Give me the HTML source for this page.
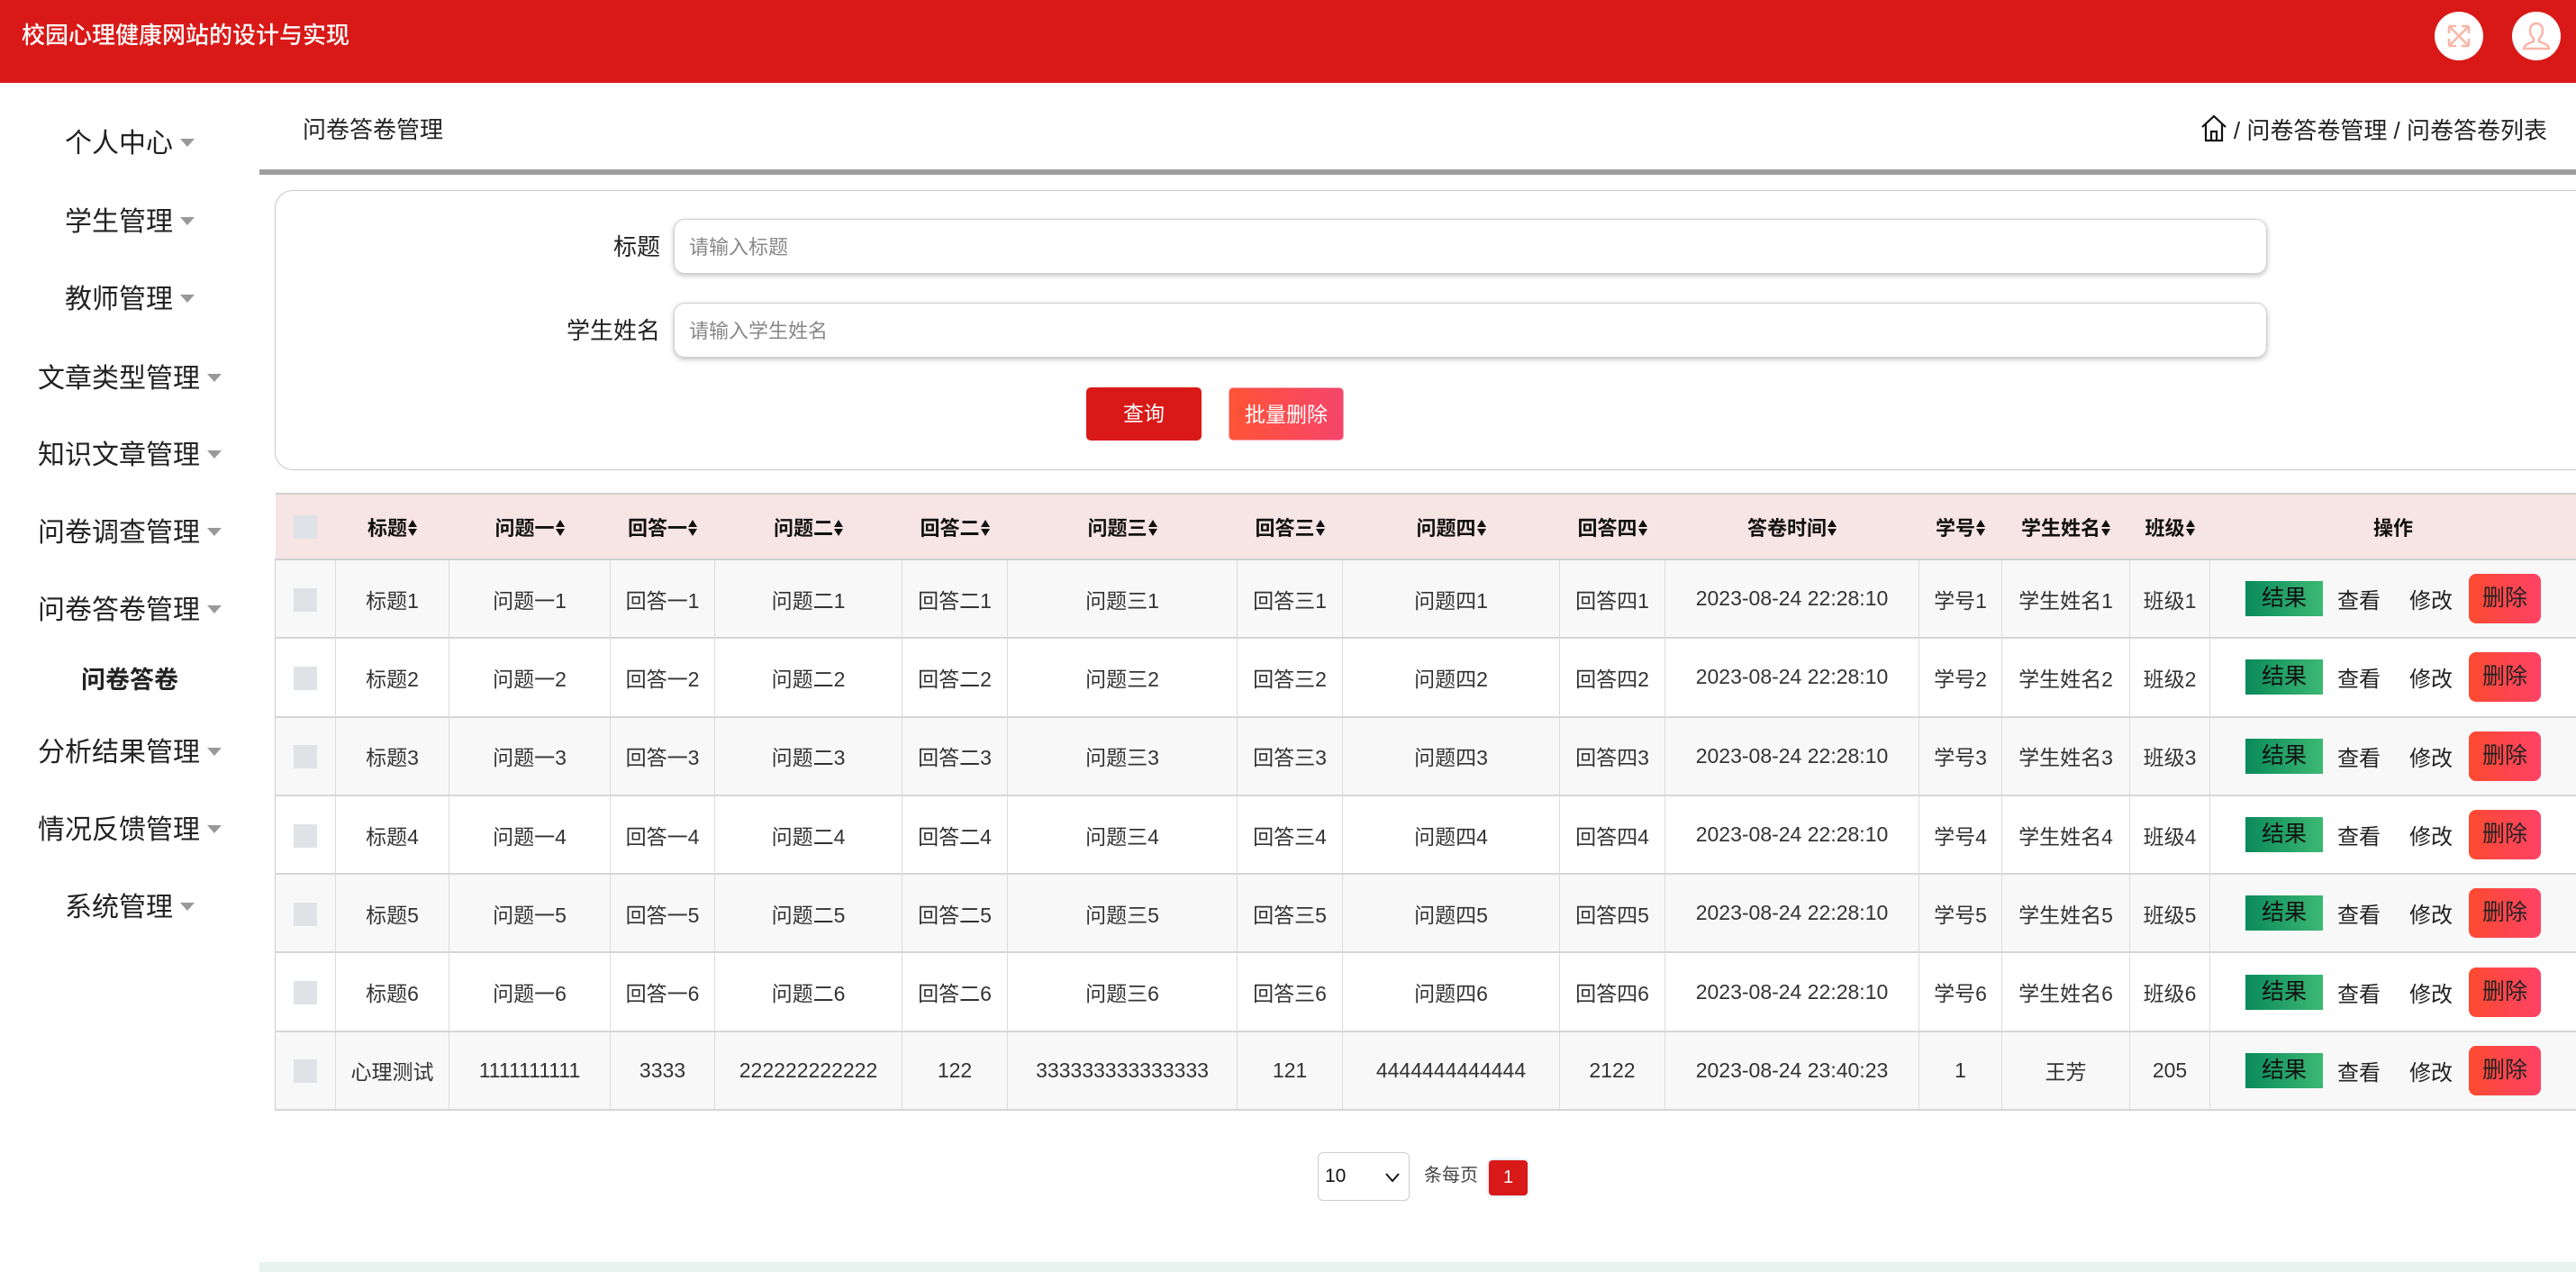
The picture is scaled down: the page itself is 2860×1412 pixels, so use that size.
<!DOCTYPE html>
<html><head><meta charset="utf-8">
<style>
*{box-sizing:border-box;margin:0;padding:0}
body{width:2860px;height:1412px;position:relative;overflow:hidden;background:#fff;font-family:"Liberation Sans","Noto Sans CJK SC",sans-serif;color:#333}
.hdr{position:absolute;left:0;top:0;width:2860px;height:92px;background:#d91918}
.hdr .t{position:absolute;left:24px;top:21px;font-size:26px;color:#fff;font-weight:500;line-height:36px}
.circ{position:absolute;top:13px;width:54px;height:54px;border-radius:50%;background:#fff}
.side{position:absolute;left:0;top:92px;width:288px}
.mi{position:absolute;left:0;width:288px;text-align:center;font-size:30px;color:#222;line-height:40px}
.mi i{display:inline-block;width:0;height:0;border-left:8px solid transparent;border-right:8px solid transparent;border-top:9px solid #999;margin-left:8px;vertical-align:middle;position:relative;top:-3px}
.sub{font-weight:bold;font-size:27px;color:#222}
.ptitle{position:absolute;left:336px;top:126px;font-size:26px;color:#222;line-height:36px}
.bc{position:absolute;right:32px;top:126px;font-size:26px;color:#222;line-height:36px}
.gline{position:absolute;left:288px;top:188px;width:2572px;height:6px;background:#9e9e9e}
.panel{position:absolute;left:305px;top:211px;width:2575px;height:311px;border:1.5px solid #c8c8c8;border-radius:20px}
.lab{position:absolute;width:300px;text-align:right;font-size:26px;color:#222;line-height:36px}
.inp{position:absolute;left:748px;width:1769px;height:61px;border:1.5px solid #d0d0d0;border-radius:12px;box-shadow:0 2px 6px rgba(0,0,0,.25);font-size:22px;color:#888;padding-left:16px;line-height:62px}
.btn{position:absolute;top:430px;height:59px;width:128px;border-radius:5px;color:#fff;font-size:23px;text-align:center;line-height:59px}
table{position:absolute;left:305px;top:547px;width:2555px;border-collapse:collapse;table-layout:fixed}
th{height:73px;background:#f7e4e4;font-size:22px;font-weight:bold;color:#111;border-top:2px solid #d0d0d0;border-bottom:2px solid #d0d0d0}
td{height:87.3px;text-align:center;font-size:23px;color:#333;border:1px solid #dcdcdc;border-bottom:2px solid #d6d6d6}
tr.o td{background:#f8f8f8}
td:first-child{border-left:1px solid #ccc}
.cb{display:inline-block;width:26px;height:26px;background:#dfe2e7;vertical-align:middle}
.ar{display:inline-block;width:10px;height:18px;vertical-align:middle;margin-left:1px;position:relative;top:-2px}
.ar:before{content:"";position:absolute;left:0;top:0;border-left:5px solid transparent;border-right:5px solid transparent;border-bottom:8px solid #111}
.ar:after{content:"";position:absolute;left:0;bottom:0;border-left:5px solid transparent;border-right:5px solid transparent;border-top:8px solid #111}
.g{display:inline-block;width:86px;height:39px;line-height:39px;background:linear-gradient(90deg,#0a8a5a,#3db874);color:#111;font-size:25px;vertical-align:middle}
.lk{display:inline-block;font-size:24px;color:#222;vertical-align:middle;margin:0 0 0 16px}
.dl{display:inline-block;width:80px;height:55px;line-height:55px;border-radius:8px;background:linear-gradient(90deg,#fd4a30,#fd4265);color:#222;font-size:25px;vertical-align:middle;margin-left:18px}
</style></head><body>
<div class="hdr"><div class="t">校园心理健康网站的设计与实现</div>
<div class="circ" style="left:2703px"><svg width="54" height="54" viewBox="0 0 54 54" fill="none" stroke="#f8b5a8" stroke-width="2.5"><path d="M16 16L38 38M38 16L16 38M16 16h8M16 16v8M38 16h-8M38 16v8M16 38h8M16 38v-8M38 38h-8M38 38v-8"/></svg></div>
<div class="circ" style="left:2789px"><svg width="54" height="54" viewBox="0 0 54 54" fill="none" stroke="#f8b5a8" stroke-width="2.5"><path d="M27 13c-5 0-7 4-7 8s2 7 4 9v3c-5 2-10 3-11 8h28c-1-5-6-6-11-8v-3c2-2 4-5 4-9s-2-8-7-8z"/></svg></div>
</div>
<div class="side">
<div class="mi" style="top:48px">个人中心<i></i></div>
<div class="mi" style="top:135px">学生管理<i></i></div>
<div class="mi" style="top:221px">教师管理<i></i></div>
<div class="mi" style="top:309px">文章类型管理<i></i></div>
<div class="mi" style="top:394px">知识文章管理<i></i></div>
<div class="mi" style="top:480px">问卷调查管理<i></i></div>
<div class="mi" style="top:566px">问卷答卷管理<i></i></div>
<div class="mi sub" style="top:643px">问卷答卷</div>
<div class="mi" style="top:724px">分析结果管理<i></i></div>
<div class="mi" style="top:810px">情况反馈管理<i></i></div>
<div class="mi" style="top:896px">系统管理<i></i></div>
</div>
<div class="ptitle">问卷答卷管理</div>
<div class="bc"><svg width="30" height="32" viewBox="0 0 30 32" fill="none" stroke="#111" stroke-width="2.2" style="vertical-align:-4px"><path d="M2 15L15 3l13 12M6 12v18h18V12M12 30V20h6v10"/></svg> / 问卷答卷管理 / 问卷答卷列表</div>
<div class="gline"></div>
<div class="panel"></div>
<div class="lab" style="left:433px;top:256px">标题</div>
<div class="inp" style="top:243px">请输入标题</div>
<div class="lab" style="left:433px;top:349px">学生姓名</div>
<div class="inp" style="top:336px">请输入学生姓名</div>
<div class="btn" style="left:1206px;background:#d91918">查询</div>
<div class="btn" style="left:1364px;background:linear-gradient(90deg,#ff5436,#f5456c);border:1.5px solid #f7a0b0">批量删除</div>
<table>
<colgroup><col style="width:67px"><col style="width:126px"><col style="width:179px"><col style="width:116px"><col style="width:208px"><col style="width:117px"><col style="width:255px"><col style="width:117px"><col style="width:241px"><col style="width:117px"><col style="width:282px"><col style="width:92px"><col style="width:142px"><col style="width:89px"><col style="width:407px"></colgroup>
<tr><th><span class="cb"></span></th><th>标题<span class="ar"></span></th><th>问题一<span class="ar"></span></th><th>回答一<span class="ar"></span></th><th>问题二<span class="ar"></span></th><th>回答二<span class="ar"></span></th><th>问题三<span class="ar"></span></th><th>回答三<span class="ar"></span></th><th>问题四<span class="ar"></span></th><th>回答四<span class="ar"></span></th><th>答卷时间<span class="ar"></span></th><th>学号<span class="ar"></span></th><th>学生姓名<span class="ar"></span></th><th>班级<span class="ar"></span></th><th>操作</th></tr>
<tr class="o"><td><span class="cb"></span></td><td>标题1</td><td>问题一1</td><td>回答一1</td><td>问题二1</td><td>回答二1</td><td>问题三1</td><td>回答三1</td><td>问题四1</td><td>回答四1</td><td>2023-08-24 22:28:10</td><td>学号1</td><td>学生姓名1</td><td>班级1</td><td><span class="g">结果</span><span class="lk">查看</span><span class="lk" style="margin-left:32px">修改</span><span class="dl">删除</span></td></tr>
<tr><td><span class="cb"></span></td><td>标题2</td><td>问题一2</td><td>回答一2</td><td>问题二2</td><td>回答二2</td><td>问题三2</td><td>回答三2</td><td>问题四2</td><td>回答四2</td><td>2023-08-24 22:28:10</td><td>学号2</td><td>学生姓名2</td><td>班级2</td><td><span class="g">结果</span><span class="lk">查看</span><span class="lk" style="margin-left:32px">修改</span><span class="dl">删除</span></td></tr>
<tr class="o"><td><span class="cb"></span></td><td>标题3</td><td>问题一3</td><td>回答一3</td><td>问题二3</td><td>回答二3</td><td>问题三3</td><td>回答三3</td><td>问题四3</td><td>回答四3</td><td>2023-08-24 22:28:10</td><td>学号3</td><td>学生姓名3</td><td>班级3</td><td><span class="g">结果</span><span class="lk">查看</span><span class="lk" style="margin-left:32px">修改</span><span class="dl">删除</span></td></tr>
<tr><td><span class="cb"></span></td><td>标题4</td><td>问题一4</td><td>回答一4</td><td>问题二4</td><td>回答二4</td><td>问题三4</td><td>回答三4</td><td>问题四4</td><td>回答四4</td><td>2023-08-24 22:28:10</td><td>学号4</td><td>学生姓名4</td><td>班级4</td><td><span class="g">结果</span><span class="lk">查看</span><span class="lk" style="margin-left:32px">修改</span><span class="dl">删除</span></td></tr>
<tr class="o"><td><span class="cb"></span></td><td>标题5</td><td>问题一5</td><td>回答一5</td><td>问题二5</td><td>回答二5</td><td>问题三5</td><td>回答三5</td><td>问题四5</td><td>回答四5</td><td>2023-08-24 22:28:10</td><td>学号5</td><td>学生姓名5</td><td>班级5</td><td><span class="g">结果</span><span class="lk">查看</span><span class="lk" style="margin-left:32px">修改</span><span class="dl">删除</span></td></tr>
<tr><td><span class="cb"></span></td><td>标题6</td><td>问题一6</td><td>回答一6</td><td>问题二6</td><td>回答二6</td><td>问题三6</td><td>回答三6</td><td>问题四6</td><td>回答四6</td><td>2023-08-24 22:28:10</td><td>学号6</td><td>学生姓名6</td><td>班级6</td><td><span class="g">结果</span><span class="lk">查看</span><span class="lk" style="margin-left:32px">修改</span><span class="dl">删除</span></td></tr>
<tr class="o"><td><span class="cb"></span></td><td>心理测试</td><td>1111111111</td><td>3333</td><td>222222222222</td><td>122</td><td>333333333333333</td><td>121</td><td>4444444444444</td><td>2122</td><td>2023-08-24 23:40:23</td><td>1</td><td>王芳</td><td>205</td><td><span class="g">结果</span><span class="lk">查看</span><span class="lk" style="margin-left:32px">修改</span><span class="dl">删除</span></td></tr>
</table>
<div style="position:absolute;left:1463px;top:1279px;width:102px;height:54px;border:1.5px solid #ccc;border-radius:6px;font-size:21px;color:#111;line-height:51px;padding-left:7px">10<svg width="20" height="14" viewBox="0 0 20 14" style="position:absolute;left:72px;top:20px" fill="none" stroke="#111" stroke-width="2"><path d="M3 3l7 8 7-8"/></svg></div>
<div style="position:absolute;left:1581px;top:1290px;font-size:20px;color:#444;line-height:30px">条每页</div>
<div style="position:absolute;left:1653px;top:1288px;width:43px;height:39px;background:#d91918;border-radius:4px;color:#fff;font-size:20px;text-align:center;line-height:39px;box-shadow:0 0 4px #bcd">1</div>
<div style="position:absolute;left:288px;top:1401px;width:2572px;height:11px;background:#e6f3ee"></div>
</body></html>
